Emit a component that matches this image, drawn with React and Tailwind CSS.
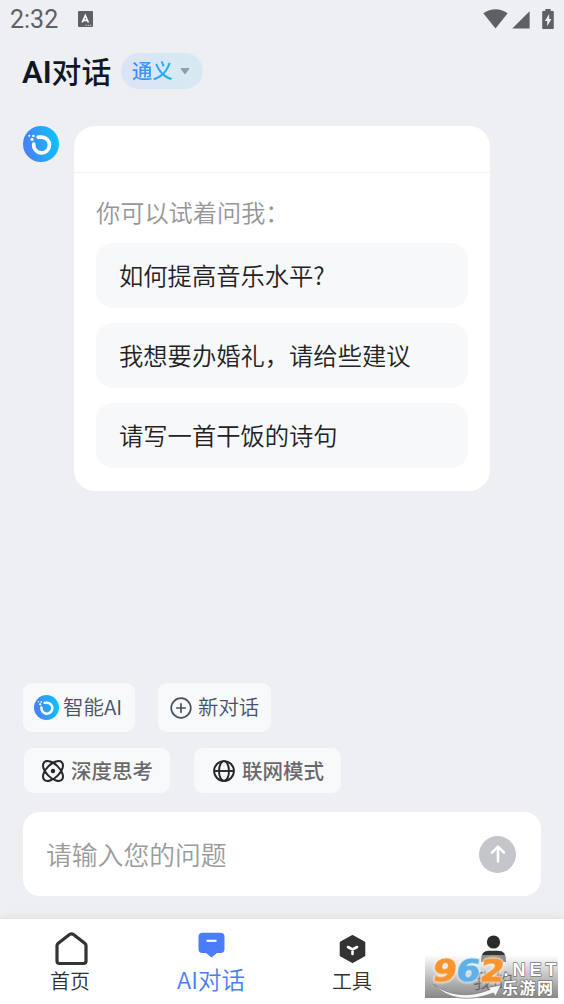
import React, { useState } from 'react';

const questions = ['如何提高音乐水平?', '我想要办婚礼，请给些建议', '请写一首干饭的诗句'];

function Logo({ className, id }) {
  return (
    <svg viewBox="0 0 36 36" className={className}>
      <defs>
        <linearGradient id={id} x1="0" y1="0.6" x2="1" y2="0.4">
          <stop offset="0" stopColor="#4a7dfb" />
          <stop offset="1" stopColor="#0bc4fb" />
        </linearGradient>
      </defs>
      <circle cx="18" cy="18" r="18" fill={`url(#${id})`} />
      <path d="M15.2 11.1 H18.6 A7.9 7.9 0 1 1 10.7 18.2" fill="none" stroke="#fff" strokeWidth="3.7" strokeLinecap="round" />
      <circle cx="9" cy="13.4" r="1.6" fill="#fff" />
      <circle cx="10.4" cy="9.9" r="1.2" fill="#fff" />
      <circle cx="6.3" cy="9.7" r="1" fill="#fff" />
    </svg>
  );
}

function StatusBar() {
  return (
    <div className="flex h-[38px] shrink-0 items-center pl-[10px] pr-[10px] text-[#5f6064]">
      <span className="pt-px text-[25px] leading-none">2:32</span>
      <svg viewBox="0 0 15 16" className="ml-[20px] h-[16px] w-[15px]">
        <rect width="15" height="16" rx="1" fill="#5f6064" />
        <path d="M4.2 11.5 L7.3 4.5 L10.4 11.5 M5.4 9.3 H9.2" fill="none" stroke="#fff" strokeWidth="1.7" />
        <path d="M7.5 14.3h1.3M9.8 14.3h1.3M12 14.3h1.3" stroke="#ddd" strokeWidth="1" />
      </svg>
      <div className="ml-auto flex items-center">
        <svg viewBox="0 0 25 20" className="h-[20px] w-[25px]">
          <path d="M0.3 4.3 Q12.5 -3.7 24.7 4.3 L12.5 19.4 Z" fill="#5f6064" />
        </svg>
        <svg viewBox="0 0 18 18" className="ml-[4px] mt-px h-[18px] w-[18px]">
          <path d="M17.6 0.3 V17.6 H0.3 Z" fill="#5f6064" />
        </svg>
        <svg viewBox="0 0 12 20" className="ml-[12px] mb-px h-[20px] w-[12px]">
          <path d="M3.3 0h5.4v2H10.8q1 0 1 1v16q0 1 -1 1H1.2q-1 0 -1-1V3q0-1 1-1h2.1z" fill="#5f6064" />
          <path d="M7.2 5 L2.8 12 H5.2 V17.2 L9.4 10 H7.2 Z" fill="#eeeff3" />
        </svg>
      </div>
    </div>
  );
}

function Header() {
  return (
    <div className="flex h-[66px] shrink-0 items-center pl-[22px]">
      <h1 className="flex items-baseline pt-[3px] text-[29.8px] font-medium leading-[36px] text-[#0f1726]">
        <span className="text-[31px] font-semibold">AI</span>
        <span>对话</span>
      </h1>
      <button className="ml-auto mr-[361px] flex h-[36px] w-[82px] items-center rounded-full bg-linear-to-r from-[#dbe4f7] to-[#d6eaf2] pl-[11px]">
        <span className="bg-linear-to-r from-[#4285ff] to-[#12b5f2] bg-clip-text pt-px text-[20.5px] font-medium leading-[30px] text-transparent">通义</span>
        <svg viewBox="0 0 10 7" className="ml-[7px] h-[7px] w-[10px]">
          <path d="M1 0.5 H9 L5 6 Z" fill="#969ca5" stroke="#969ca5" strokeLinejoin="round" />
        </svg>
      </button>
    </div>
  );
}

function Chat() {
  return (
    <div className="mt-[22px] flex items-start pl-[23px]">
      <Logo id="logoChat" className="h-[36px] w-[36px]" />
      <div className="ml-[15px] h-[365px] w-[416px] rounded-[21px] bg-white">
        <div className="h-[47px] border-b border-[#f0f1f2]"></div>
        <div className="px-[22px] pt-[23px]">
          <p className="text-[24.2px] font-[350] leading-[36px] text-[#969696]">你可以试着问我：</p>
          <div className="mt-[11px] flex flex-col gap-[15px]">
            {questions.map(q => (
              <button key={q} className="flex h-[65px] items-center rounded-[17px] bg-[#f7f8fa] pb-px pl-[23px] text-left font-['Noto_Sans_CJK_SC',sans-serif] text-[24.3px] font-[350] leading-[36px] text-[#222]">
                {q}
              </button>
            ))}
          </div>
        </div>
      </div>
    </div>
  );
}

function Chips() {
  return (
    <div className="mt-auto flex flex-col gap-[16px] pl-[23px]">
      <div className="flex gap-[23px]">
        <button className="flex h-[49px] w-[112px] items-center rounded-[9px] bg-[#f8f9fb] pl-[11px] font-['Noto_Sans_CJK_SC',sans-serif] text-[20.5px] font-[350] leading-[30px] text-[#475266]">
          <Logo id="logoChip" className="h-[25px] w-[25px]" />
          <span className="mb-[3px] ml-[4px] whitespace-nowrap">智能AI</span>
        </button>
        <button className="flex h-[49px] w-[113px] items-center rounded-[9px] bg-[#f8f9fb] pl-[12px] text-[20.4px] font-[350] leading-[30px] text-[#475266]">
          <svg viewBox="0 0 22 22" className="h-[22px] w-[22px]" fill="none" stroke="#475266" strokeWidth="1.7" strokeLinecap="round">
            <circle cx="11" cy="11" r="9.8" />
            <path d="M11 6.8v8.4M6.8 11h8.4" />
          </svg>
          <span className="ml-[6px] whitespace-nowrap">新对话</span>
        </button>
      </div>
      <div className="flex gap-[24px] pl-px">
        <button className="flex h-[45px] w-[146px] items-center rounded-[9px] bg-[#f8f9fb] pl-[17px] text-[20.5px] font-medium leading-[30px] text-[#68696c]">
          <svg viewBox="0 0 24 24" className="h-[24px] w-[24px]" fill="none" stroke="#252629" strokeWidth="2">
            <ellipse cx="12" cy="12" rx="12.4" ry="6.6" transform="rotate(45 12 12)" />
            <ellipse cx="12" cy="12" rx="12.4" ry="6.6" transform="rotate(-45 12 12)" />
            <circle cx="12" cy="12" r="2.2" fill="#252629" stroke="none" />
          </svg>
          <span className="ml-[6px] mt-[2px] whitespace-nowrap">深度思考</span>
        </button>
        <button className="flex h-[45px] w-[147px] items-center rounded-[9px] bg-[#f8f9fb] pl-[18px] text-[20.5px] font-medium leading-[30px] text-[#68696c]">
          <svg viewBox="0 0 24 24" className="h-[24px] w-[24px]" fill="none" stroke="#252629" strokeWidth="1.9">
            <circle cx="12" cy="12" r="9.9" />
            <ellipse cx="12" cy="12" rx="5" ry="9.9" />
            <path d="M2 12h20" />
          </svg>
          <span className="ml-[6px] mt-[2px] whitespace-nowrap">联网模式</span>
        </button>
      </div>
    </div>
  );
}

function MessageInput() {
  const [message, setMessage] = useState('');

  return (
    <div className="mx-[23px] mb-[23px] mt-[19px] flex h-[84px] shrink-0 items-center rounded-[17px] bg-white pl-[23px] pr-[25px]">
      <input
        type="text"
        value={message}
        onChange={e => setMessage(e.target.value)}
        placeholder="请输入您的问题"
        className="mt-[4px] min-w-0 flex-1 text-[25.8px] font-[350] leading-[38px] text-[#222] outline-none placeholder:text-[#9b9b9b]"
      />
      <button className="flex h-[37px] w-[37px] items-center justify-center rounded-full bg-[#c5c6ca]">
        <svg viewBox="0 0 18 20" className="h-[20px] w-[18px]" fill="none" stroke="#fff" strokeWidth="2.5" strokeLinecap="round" strokeLinejoin="round">
          <path d="M9 17.5V3M3 8.7L9 2.7L15 8.7" />
        </svg>
      </button>
    </div>
  );
}

function TabItem({ label, children, active }) {
  return (
    <button className={`flex flex-1 flex-col items-center pr-px pt-[9px] font-['Noto_Sans_CJK_SC',sans-serif] ${active ? 'text-[#4a7dfb]' : 'text-[#303030]'}`}>
      <svg viewBox="0 0 40 40" className="h-[40px] w-[40px]">{children}</svg>
      <span className={`font-[350] whitespace-nowrap leading-[30px] ${active ? 'text-[23.5px] -mt-[4px]' : 'text-[20px] -mt-[2px]'}`}>{label}</span>
    </button>
  );
}

function Watermark() {
  return (
    <div className="absolute left-[425px] top-[955px] h-[43px] w-[133px] bg-linear-to-b from-[#ffffff70] to-[#666666c8]">
      <svg viewBox="0 0 133 43" className="h-full w-full overflow-visible">
        <g className="[filter:drop-shadow(0_0_0.8px_#fff)_drop-shadow(0_0_0.8px_#fff)]" fontFamily="'DejaVu Sans', sans-serif" fontWeight="bold" fontSize="31" strokeWidth="1.1" strokeLinejoin="round" transform="translate(6.5 26.5) skewX(-8)">
          <text x="0" y="0" fill="#f7942b" stroke="#f7942b" textLength="24" lengthAdjust="spacingAndGlyphs">9</text>
          <text x="23.5" y="0" fill="#5fb0e6" stroke="#5fb0e6" textLength="24" lengthAdjust="spacingAndGlyphs">6</text>
          <text x="47.5" y="0" fill="#f7942b" stroke="#f7942b" textLength="24" lengthAdjust="spacingAndGlyphs">2</text>
        </g>
        <path d="M8.5 29.5 Q33 47 65 34.5 L63 32.5 L76 30 L70.5 41.5 L68.5 38 Q31 52 8.5 29.5Z" fill="#f6f6f6" stroke="#777" strokeWidth="0.7" />
        <g fill="#fff" stroke="#777" strokeWidth="1.4" strokeLinejoin="round" paintOrder="stroke" fontWeight="bold">
          <text x="78.5" y="20.5" fontFamily="'Liberation Sans', Arial, sans-serif" fontSize="18" textLength="53" lengthAdjust="spacing">.NET</text>
          <text x="77" y="38.5" fontFamily="'Noto Sans CJK SC', sans-serif" fontSize="16" textLength="51">乐游网</text>
        </g>
      </svg>
    </div>
  );
}

function TabBar() {
  return (
    <div className="flex h-[85px] shrink-0 bg-white shadow-[0_-2px_8px_rgba(0,0,0,0.07)]">
      <TabItem label="首页">
        <path d="M7 17.5 Q7 16.3 8 15.5 L19.5 6.5 Q21.5 5.1 23.5 6.5 L35 15.5 Q36 16.3 36 17.5 V33 Q36 35.5 33.5 35.5 H9.5 Q7 35.5 7 33 Z" fill="none" stroke="#333" strokeWidth="3.2" strokeLinejoin="round" />
      </TabItem>
      <TabItem label="AI对话" active>
        <path d="M11.5 4.7 H29.5 Q33.5 4.7 33.5 8.7 V21 Q33.5 25 29.5 25 H26 L20.5 29.5 L15 25 H11.5 Q7.5 25 7.5 21 V8.7 Q7.5 4.7 11.5 4.7 Z" fill="#4a7dfb" />
        <path d="M15.5 12.8 H25.5" stroke="#fff" strokeWidth="2.2" />
      </TabItem>
      <TabItem label="工具">
        <path d="M20.5 8.5 L31.8 14.7 V27.3 L20.5 33.5 L9.2 27.3 V14.7 Z" fill="#333" stroke="#333" strokeWidth="3" strokeLinejoin="round" />
        <path d="M16 19 L20.5 21.5 L25 19 M20.5 21.5 V26" fill="none" stroke="#fff" strokeWidth="2.6" strokeLinecap="round" />
      </TabItem>
      <TabItem label="我的">
        <circle cx="20.5" cy="14" r="6.6" fill="#2b2b2b" />
        <path d="M8 32 Q8 22.8 16 22.8 H25 Q33 22.8 33 32 V34 H8 Z" fill="#333" />
      </TabItem>
    </div>
  );
}

function App() {
  return (
    <div className="relative flex h-[1004px] w-[564px] flex-col overflow-hidden bg-[#eeeff3] font-[Roboto,'Noto_Sans_CJK_SC',sans-serif]">
      <StatusBar />
      <Header />
      <Chat />
      <Chips />
      <MessageInput />
      <TabBar />
      <Watermark />
    </div>
  );
}

export default App;
